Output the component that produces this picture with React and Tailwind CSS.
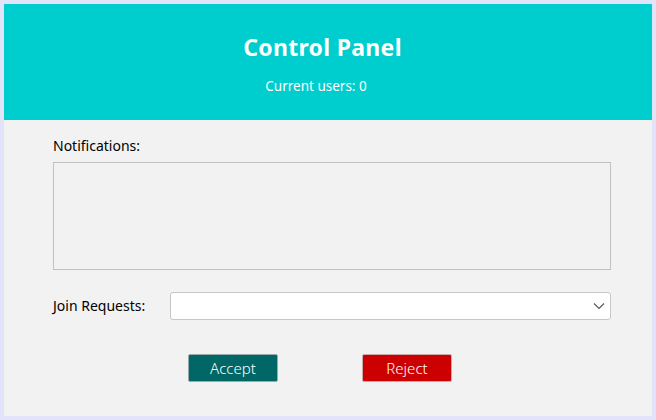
import React from 'react';

export default function App() {
	return (
		<div className="w-[656px] h-[420px] bg-[#e3e3fc] p-1 font-['Noto_Sans','Open_Sans',sans-serif]">
			<div className="flex flex-col h-full bg-[#f2f2f2]">
				<header className="h-[116px] bg-[#00cdcd] flex flex-col items-center pt-[28px] text-white">
					<h1 className="text-[23px] font-bold leading-[30px] tracking-[0.3px] mr-[11px]">Control Panel</h1>
					<p className="text-[13.5px] mt-[14px] leading-[20px] mr-[24px]">Current users: 0</p>
				</header>

				<div className="pl-[49px] pr-[41px] pt-[16px]">
					<label className="block text-[14px] leading-[20px] text-black">Notifications:</label>
					<textarea
						className="block mt-[6px] w-[558px] h-[108px] border border-[#c2c2c2] bg-[#f2f2f2] resize-none outline-none"
						readOnly
					/>

					<div className="flex items-center mt-[22px]">
						<span className="w-[117px] shrink-0 text-[14px] leading-[20px] text-black">Join Requests:</span>
						<div className="relative w-[441px] h-[28px] bg-white border border-[#c6c6c6] rounded-[3px]">
							<svg
								className="absolute right-[4px] top-[6px]"
								width="14"
								height="14"
								viewBox="0 0 14 14"
								fill="none"
								stroke="#555"
								strokeWidth="1.1"
							>
								<path d="M2 4.5 L7 9.5 L12 4.5" />
							</svg>
						</div>
					</div>

					<div className="flex mt-[34px] pl-[135px] gap-[84px]">
						<button className="w-[90px] h-[28px] bg-[#006666] border border-[#9aa] rounded-[2px] text-white text-[15px] font-light">
							Accept
						</button>
						<button className="w-[90px] h-[28px] bg-[#cc0000] border border-[#caa] rounded-[2px] text-white text-[15px] font-light">
							Reject
						</button>
					</div>
				</div>
			</div>
		</div>
	);
}
